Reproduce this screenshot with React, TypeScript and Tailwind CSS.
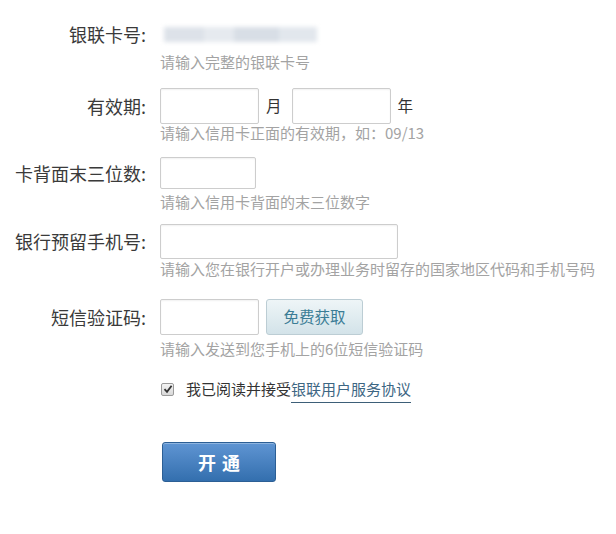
import React from "react";

const font = { fontFamily: '"Noto Sans CJK SC", "Microsoft YaHei", sans-serif' };

function Label({ text, h }: { text: string; h: string }) {
  return (
    <div className={`w-[146px] shrink-0 flex items-center justify-end text-[18px] text-[#3a3a3a] ${h}`}>
      {text}
    </div>
  );
}

function Hint({ text, cls = "" }: { text: string; cls?: string }) {
  return <div className={`text-[15px] leading-[18px] text-[#a3a3a3] whitespace-nowrap ${cls}`}>{text}</div>;
}

const inputCls =
  "border border-[#cdcdcd] rounded-[2px] bg-white shadow-[inset_0_1px_2px_rgba(0,0,0,0.06)]";

export default function App() {
  return (
    <div className="w-[616px] h-[534px] bg-white relative overflow-hidden" style={font}>
      <div className="flex flex-col">
        {/* Row 1 */}
        <div className="flex mt-[24px]">
          <Label text="银联卡号:" h="h-[20px]" />
          <div className="ml-[14px] flex flex-col">
            <div className="h-[20px] flex items-center">
              <div className="ml-[4px] flex h-[15px] blur-[2px]">
                <div className="w-[40px] bg-[#dde2e9]" />
                <div className="w-[30px] bg-[#e6eaef]" />
                <div className="w-[45px] bg-[#d8dee6]" />
                <div className="w-[38px] bg-[#e2e7ed]" />
              </div>
            </div>
            <Hint text="请输入完整的银联卡号" cls="mt-[9px]" />
          </div>
        </div>

        {/* Row 2 */}
        <div className="flex mt-[17px]">
          <Label text="有效期:" h="h-[36px]" />
          <div className="ml-[14px] flex flex-col">
            <div className="flex items-center h-[36px]">
              <div className={`${inputCls} w-[99px] h-[36px]`} />
              <span className="ml-[7px] text-[15.5px] text-[#333]">月</span>
              <div className={`${inputCls} w-[99px] h-[36px] ml-[10px]`} />
              <span className="ml-[7px] text-[15.5px] text-[#333]">年</span>
            </div>
            <Hint text="请输入信用卡正面的有效期，如：09/13" />
          </div>
        </div>

        {/* Row 3 */}
        <div className="flex mt-[15px]">
          <Label text="卡背面末三位数:" h="h-[32px]" />
          <div className="ml-[14px] flex flex-col">
            <div className={`${inputCls} w-[96px] h-[32px]`} />
            <Hint text="请输入信用卡背面的末三位数字" cls="mt-[4px]" />
          </div>
        </div>

        {/* Row 4 */}
        <div className="flex mt-[13px]">
          <Label text="银行预留手机号:" h="h-[35px]" />
          <div className="ml-[14px] flex flex-col">
            <div className={`${inputCls} w-[238px] h-[35px]`} />
            <Hint text="请输入您在银行开户或办理业务时留存的国家地区代码和手机号码" cls="mt-[1px]" />
          </div>
        </div>

        {/* Row 5 */}
        <div className="flex mt-[21px]">
          <Label text="短信验证码:" h="h-[36px]" />
          <div className="ml-[14px] flex flex-col">
            <div className="flex items-center h-[36px]">
              <div className={`${inputCls} w-[99px] h-[36px]`} />
              <button className="ml-[7px] w-[97px] h-[36px] rounded-[3px] border border-[#bccdd4] bg-gradient-to-b from-[#eef5f7] to-[#d3e3e9] text-[15.5px] text-[#3b7d96]">
                免费获取
              </button>
            </div>
            <Hint text="请输入发送到您手机上的6位短信验证码" cls="mt-[5px]" />
          </div>
        </div>

        {/* Agreement */}
        <div className="flex mt-[21px] h-[20px] items-center">
          <div className="w-[160px] shrink-0" />
          <span className="w-[13px] h-[13px] ml-[1px] rounded-[2px] border border-[#9a9a9a] bg-gradient-to-b from-[#f4f4f4] to-[#d8d8d8] flex items-center justify-center">
            <svg width="10" height="10" viewBox="0 0 10 10">
              <path d="M1.5 5.2 L4 7.8 L8.6 1.8" fill="none" stroke="#333" strokeWidth="1.8" />
            </svg>
          </span>
          <span className="ml-[12px] text-[15px] text-[#333] whitespace-nowrap">
            我已阅读并接受
            <span className="text-[#3d6683] border-b border-[#3d5f78] pb-[3px]">银联用户服务协议</span>
          </span>
        </div>

        {/* Submit */}
        <div className="flex mt-[43px]">
          <div className="w-[162px] shrink-0" />
          <button className="w-[114px] h-[40px] rounded-[3px] border border-[#2c5f95] bg-gradient-to-b from-[#5f95d3] to-[#336fae] text-white font-bold text-[18px] tracking-[6px] shadow-[inset_0_1px_0_rgba(255,255,255,0.3)]">
            <span className="ml-[6px]">开通</span>
          </button>
        </div>
      </div>
    </div>
  );
}
